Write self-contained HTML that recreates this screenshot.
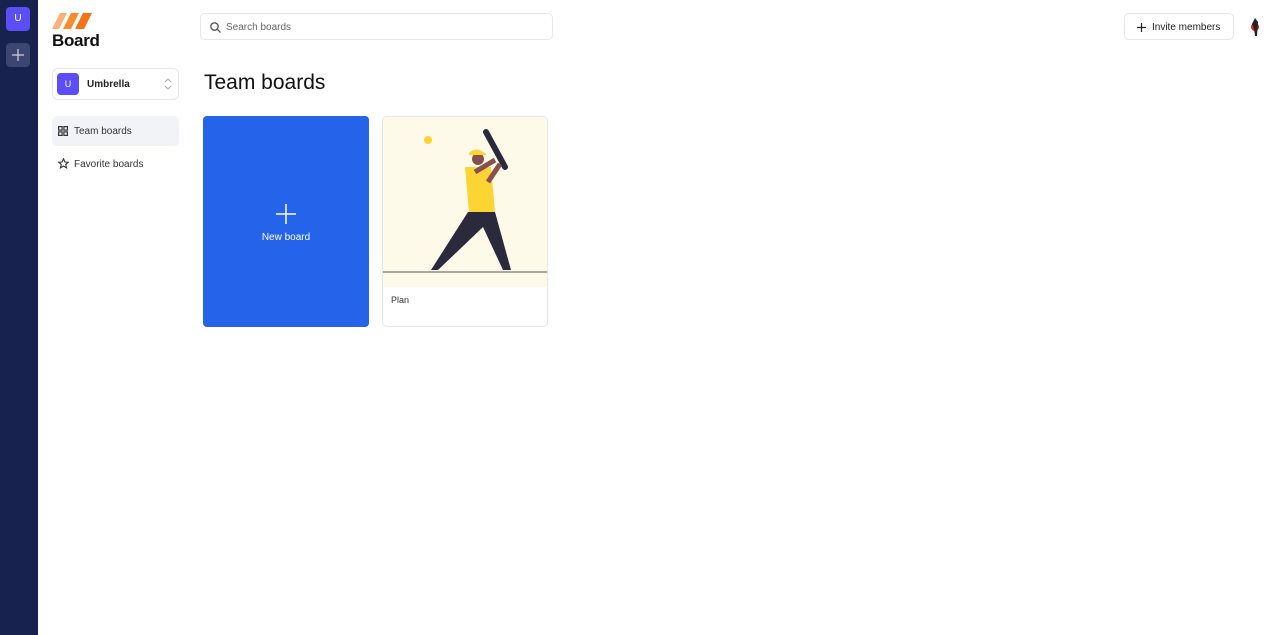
<!DOCTYPE html>
<html><head><meta charset="utf-8"><style>
*{box-sizing:border-box;margin:0;padding:0}
body{width:1280px;height:635px;overflow:hidden;background:#fff;font-family:"Liberation Sans",sans-serif;position:relative;color:#111}
.rail{position:absolute;left:0;top:0;width:38px;height:635px;background:#17224f}
.abs{position:absolute}
</style></head><body>
<div class="rail">
 <div class="abs" style="left:6px;top:7px;width:24px;height:24px;border-radius:4px;background:#5b4ef5;color:#fff;font-size:10px;text-align:center;line-height:24px">U</div>
 <div class="abs" style="left:6px;top:43px;width:24px;height:24px;border-radius:4px;background:#3c4670"><svg width="24" height="24" stroke="#c8cbd8" stroke-width="1.3"><line x1="12" y1="6" x2="12" y2="18"/><line x1="6" y1="12" x2="18" y2="12"/></svg></div>
</div>
<svg class="abs" style="left:52px;top:13px" width="42" height="17"><polygon points="8,0 15,0 7,16 0,16" fill="#fdb17a"/><polygon points="19,0 27,0 19,16 11,16" fill="#fb8a2e"/><polygon points="31,0 40,0 32,16 23,16" fill="#f97316"/></svg>
<div class="abs" style="left:52px;top:31px;font-size:17px;font-weight:bold;color:#111;letter-spacing:-0.3px">Board</div>
<div class="abs" style="left:52px;top:68px;width:127px;height:32px;border:1px solid #e5e7eb;border-radius:6px">
 <div class="abs" style="left:4px;top:4px;width:22px;height:22px;border-radius:4px;background:#5b4ef5;color:#fff;font-size:9px;text-align:center;line-height:22px">U</div>
 <div class="abs" style="left:34px;top:10px;font-size:10px;font-weight:bold;color:#222">Umbrella</div>
 <svg class="abs" style="left:111px;top:9px" width="8" height="12" fill="none" stroke="#aaa" stroke-width="1"><path d="M1 4 L4 1 L7 4 M1 8 L4 11 L7 8"/></svg>
</div>
<div class="abs" style="left:52px;top:116px;width:127px;height:30px;border-radius:5px;background:#f1f3f7"></div>
<svg class="abs" style="left:58px;top:126px" width="10" height="10" fill="none" stroke="#333" stroke-width="1.2"><rect x=".6" y=".6" width="3.5" height="3.5"/><rect x="5.9" y=".6" width="3.5" height="3.5"/><rect x=".6" y="5.9" width="3.5" height="3.5"/><rect x="5.9" y="5.9" width="3.5" height="3.5"/></svg>
<div class="abs" style="left:74px;top:126px;font-size:10px;color:#333">Team boards</div>
<svg class="abs" style="left:58px;top:158px" width="11" height="11" fill="none" stroke="#333" stroke-width="1.1"><polygon points="5.5,0.8 6.9,4 10.3,4.2 7.7,6.4 8.5,9.8 5.5,8 2.5,9.8 3.3,6.4 0.7,4.2 4.1,4"/></svg>
<div class="abs" style="left:74px;top:159px;font-size:10px;color:#333">Favorite boards</div>
<div class="abs" style="left:200px;top:13px;width:353px;height:27px;border:1px solid #e5e7eb;border-radius:5px">
 <svg class="abs" style="left:9px;top:8px" width="11" height="11" fill="none" stroke="#555" stroke-width="1.3"><circle cx="4.5" cy="4.5" r="3.7"/><line x1="7.3" y1="7.3" x2="10.5" y2="10.5"/></svg>
 <div class="abs" style="left:25px;top:8px;font-size:10px;color:#666">Search boards</div>
</div>
<div class="abs" style="left:1124px;top:13px;width:110px;height:27px;border:1px solid #e5e7eb;border-radius:5px">
 <svg class="abs" style="left:12px;top:9px" width="9" height="9" stroke="#222" stroke-width="1.2"><line x1="4.5" y1="0" x2="4.5" y2="9"/><line x1="0" y1="4.5" x2="9" y2="4.5"/></svg>
 <div class="abs" style="left:27px;top:8px;font-size:10px;color:#222">Invite members</div>
</div>
<svg class="abs" style="left:1246px;top:16px" width="20" height="22"><circle cx="10" cy="11" r="10" fill="#fff"/><circle cx="9" cy="11" r="4" fill="#d22"/><path d="M9 2 L12 6 L11 20 L9 20 L8 12 L6 8z" fill="#222"/></svg>
<div class="abs" style="left:204px;top:71px;font-size:21px;color:#111">Team boards</div>
<div class="abs" style="left:203px;top:116px;width:166px;height:211px;background:#2563eb;border-radius:4px;color:#fff;text-align:center">
 <svg class="abs" style="left:73px;top:88px" width="20" height="20" stroke="#fff" stroke-width="1.5"><line x1="10" y1="0" x2="10" y2="20"/><line x1="0" y1="10" x2="20" y2="10"/></svg>
 <div class="abs" style="left:0;top:116px;width:166px;font-size:10px">New board</div>
</div>
<div class="abs" style="left:382px;top:116px;width:166px;height:211px;border:1px solid #e5e7eb;border-radius:5px;overflow:hidden">
 <svg width="166" height="170" style="display:block;background:#fefae9">
  <circle cx="45" cy="23" r="4" fill="#fcd535"/>
  <line x1="0" y1="155" x2="166" y2="155" stroke="#555" stroke-width="1"/>
  <polygon points="85,95 112,95 128,153 120,153 100,110 55,153 48,153" fill="#2b2a3c"/>
  <polygon points="82,50 108,50 112,95 86,95" fill="#fcd535"/>
  <line x1="103" y1="15" x2="122" y2="50" stroke="#2b2a3c" stroke-width="6" stroke-linecap="round"/>
  <circle cx="95" cy="42" r="6" fill="#8a4e4e"/>
  <path d="M86 36 q8 -8 18 2 l-18 0z" fill="#fcd535"/>
  <path d="M105 65 l12 -18 M92 55 l20 -12" stroke="#8a4e4e" stroke-width="5" fill="none"/>
 </svg>
 <div style="padding:8px 8px;font-size:9px;color:#333">Plan</div>
</div>
</body></html>
